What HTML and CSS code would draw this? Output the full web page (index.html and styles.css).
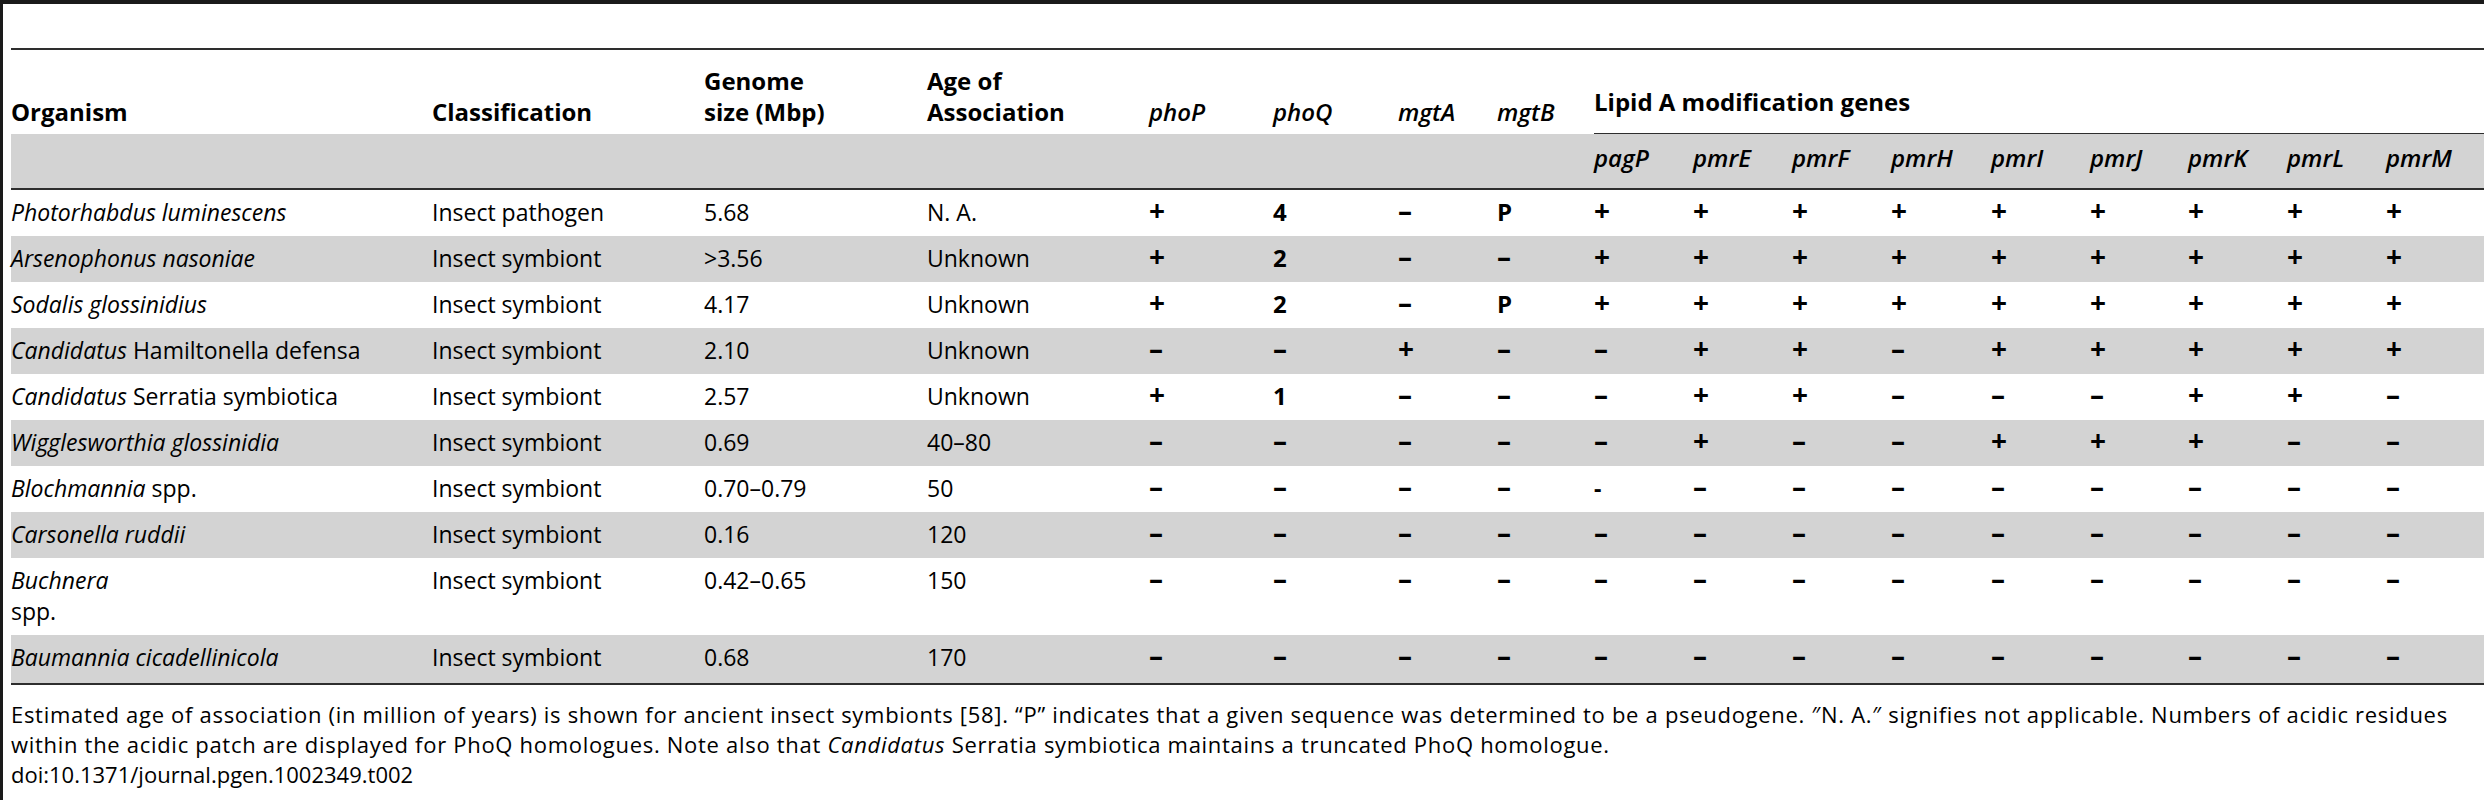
FILE: index.html
```html
<!DOCTYPE html>
<html lang="en">
<head>
<meta charset="utf-8">
<title>Table 2</title>
<link rel="stylesheet" href="styles.css">
</head>
<body>
<div class="page">
  <table class="tbl">
    <colgroup>
      <col class="w421"><col class="w272"><col class="w223"><col class="w222">
      <col class="w124"><col class="w125"><col class="w99"><col class="w97">
      <col class="w99"><col class="w99"><col class="w99"><col class="w100">
      <col class="w99"><col class="w98"><col class="w99"><col class="w99"><col class="w98">
    </colgroup>
    <thead>
      <tr class="h1">
        <th>Organism</th>
        <th>Classification</th>
        <th>Genome<br>size (Mbp)</th>
        <th>Age of<br>Association</th>
        <th class="gene">phoP</th>
        <th class="gene">phoQ</th>
        <th class="gene">mgtA</th>
        <th class="gene">mgtB</th>
        <th class="lipid" colspan="9">Lipid A modification genes</th>
      </tr>
      <tr class="h2">
        <th></th><th></th><th></th><th></th><th></th><th></th><th></th><th></th>
        <th>pagP</th><th>pmrE</th><th>pmrF</th><th>pmrH</th><th>pmrI</th><th>pmrJ</th><th>pmrK</th><th>pmrL</th><th>pmrM</th>
      </tr>
    </thead>
    <tbody>
      <tr>
        <td><i>Photorhabdus luminescens</i></td><td>Insect pathogen</td><td>5.68</td><td>N. A.</td>
        <td class="s">+</td><td class="n">4</td><td class="s">–</td><td class="n">P</td>
        <td class="s">+</td><td class="s">+</td><td class="s">+</td><td class="s">+</td><td class="s">+</td><td class="s">+</td><td class="s">+</td><td class="s">+</td><td class="s">+</td>
      </tr>
      <tr>
        <td><i>Arsenophonus nasoniae</i></td><td>Insect symbiont</td><td>&gt;3.56</td><td>Unknown</td>
        <td class="s">+</td><td class="n">2</td><td class="s">–</td><td class="s">–</td>
        <td class="s">+</td><td class="s">+</td><td class="s">+</td><td class="s">+</td><td class="s">+</td><td class="s">+</td><td class="s">+</td><td class="s">+</td><td class="s">+</td>
      </tr>
      <tr>
        <td><i>Sodalis glossinidius</i></td><td>Insect symbiont</td><td>4.17</td><td>Unknown</td>
        <td class="s">+</td><td class="n">2</td><td class="s">–</td><td class="n">P</td>
        <td class="s">+</td><td class="s">+</td><td class="s">+</td><td class="s">+</td><td class="s">+</td><td class="s">+</td><td class="s">+</td><td class="s">+</td><td class="s">+</td>
      </tr>
      <tr>
        <td><i>Candidatus</i> Hamiltonella defensa</td><td>Insect symbiont</td><td>2.10</td><td>Unknown</td>
        <td class="s">–</td><td class="s">–</td><td class="s">+</td><td class="s">–</td>
        <td class="s">–</td><td class="s">+</td><td class="s">+</td><td class="s">–</td><td class="s">+</td><td class="s">+</td><td class="s">+</td><td class="s">+</td><td class="s">+</td>
      </tr>
      <tr>
        <td><i>Candidatus</i> Serratia symbiotica</td><td>Insect symbiont</td><td>2.57</td><td>Unknown</td>
        <td class="s">+</td><td class="n">1</td><td class="s">–</td><td class="s">–</td>
        <td class="s">–</td><td class="s">+</td><td class="s">+</td><td class="s">–</td><td class="s">–</td><td class="s">–</td><td class="s">+</td><td class="s">+</td><td class="s">–</td>
      </tr>
      <tr>
        <td><i>Wigglesworthia glossinidia</i></td><td>Insect symbiont</td><td>0.69</td><td>40–80</td>
        <td class="s">–</td><td class="s">–</td><td class="s">–</td><td class="s">–</td>
        <td class="s">–</td><td class="s">+</td><td class="s">–</td><td class="s">–</td><td class="s">+</td><td class="s">+</td><td class="s">+</td><td class="s">–</td><td class="s">–</td>
      </tr>
      <tr>
        <td><i>Blochmannia</i> spp.</td><td>Insect symbiont</td><td>0.70–0.79</td><td>50</td>
        <td class="s">–</td><td class="s">–</td><td class="s">–</td><td class="s">–</td>
        <td class="hy">-</td><td class="s">–</td><td class="s">–</td><td class="s">–</td><td class="s">–</td><td class="s">–</td><td class="s">–</td><td class="s">–</td><td class="s">–</td>
      </tr>
      <tr>
        <td><i>Carsonella ruddii</i></td><td>Insect symbiont</td><td>0.16</td><td>120</td>
        <td class="s">–</td><td class="s">–</td><td class="s">–</td><td class="s">–</td>
        <td class="s">–</td><td class="s">–</td><td class="s">–</td><td class="s">–</td><td class="s">–</td><td class="s">–</td><td class="s">–</td><td class="s">–</td><td class="s">–</td>
      </tr>
      <tr>
        <td><i>Buchnera</i><br>spp.</td><td>Insect symbiont</td><td>0.42–0.65</td><td>150</td>
        <td class="s">–</td><td class="s">–</td><td class="s">–</td><td class="s">–</td>
        <td class="s">–</td><td class="s">–</td><td class="s">–</td><td class="s">–</td><td class="s">–</td><td class="s">–</td><td class="s">–</td><td class="s">–</td><td class="s">–</td>
      </tr>
      <tr class="last">
        <td><i>Baumannia cicadellinicola</i></td><td>Insect symbiont</td><td>0.68</td><td>170</td>
        <td class="s">–</td><td class="s">–</td><td class="s">–</td><td class="s">–</td>
        <td class="s">–</td><td class="s">–</td><td class="s">–</td><td class="s">–</td><td class="s">–</td><td class="s">–</td><td class="s">–</td><td class="s">–</td><td class="s">–</td>
      </tr>
    </tbody>
  </table>
  <p class="note">Estimated age of association (in million of years) is shown for ancient insect symbionts [58]. “P” indicates that a given sequence was determined to be a pseudogene. ″N. A.″ signifies not applicable. Numbers of acidic residues within the acidic patch are displayed for PhoQ homologues. Note also that <i>Candidatus</i> Serratia symbiotica maintains a truncated PhoQ homologue.</p>
  <p class="doi">doi:10.1371/journal.pgen.1002349.t002</p>
</div>
</body>
</html>
```

FILE: styles.css
```css
html, body {
  margin: 0;
  padding: 0;
  background: #ffffff;
}

body {
  font-family: "Open Sans", "Noto Sans", sans-serif;
  color: #000000;
}

.page {
  width: 2484px;
  height: 800px;
  box-sizing: border-box;
  border-top: 4px solid #1a1a1a;
  border-left: 3px solid #1a1a1a;
  padding-left: 8px;
  overflow: hidden;
}

.tbl {
  margin-top: 44px;
  width: 2473px;
  table-layout: fixed;
  border-collapse: separate;
  border-spacing: 0;
}

.w421 { width: 421px; }
.w272 { width: 272px; }
.w223 { width: 223px; }
.w222 { width: 222px; }
.w124 { width: 124px; }
.w125 { width: 125px; }
.w100 { width: 100px; }
.w99 { width: 99px; }
.w98 { width: 98px; }
.w97 { width: 97px; }

.tbl th,
.tbl td {
  padding: 0;
  text-align: left;
  white-space: nowrap;
}

/* header row 1 */
.h1 th {
  border-top: 2px solid #2e2e2e;
  font-size: 24px;
  font-weight: 700;
  line-height: 31px;
  padding: 15px 0 7px;
  vertical-align: bottom;
}

.h1 th.gene {
  font-style: italic;
  font-weight: 600;
}

.h1 th.lipid {
  padding-bottom: 16px;
  border-bottom: 1px solid #2e2e2e;
}

/* header row 2 (grey) */
.h2 th {
  background: #d3d3d3;
  border-bottom: 2px solid #2e2e2e;
  font-size: 24px;
  font-style: italic;
  font-weight: 600;
  line-height: 31px;
  padding: 8px 0 15px;
  vertical-align: baseline;
}

/* body */
.tbl td {
  font-size: 23px;
  line-height: 31px;
  padding: 7px 0 8px;
  vertical-align: baseline;
}

.tbl tbody tr:nth-child(even) td {
  background: #d3d3d3;
}

.tbl tr.last td {
  padding-bottom: 10px;
  border-bottom: 2px solid #2e2e2e;
}

.tbl td.s {
  font-size: 28px;
  font-weight: 700;
  line-height: 27px;
}

.tbl td.n {
  font-size: 24px;
  font-weight: 700;
  line-height: 30px;
}

.tbl td.hy {
  font-weight: 700;
}

/* footnote */
.note,
.doi {
  margin: 0;
  width: 2473px;
  font-size: 22px;
  line-height: 30px;
}

.note {
  margin-top: 14px;
  letter-spacing: 0.7px;
}
```
